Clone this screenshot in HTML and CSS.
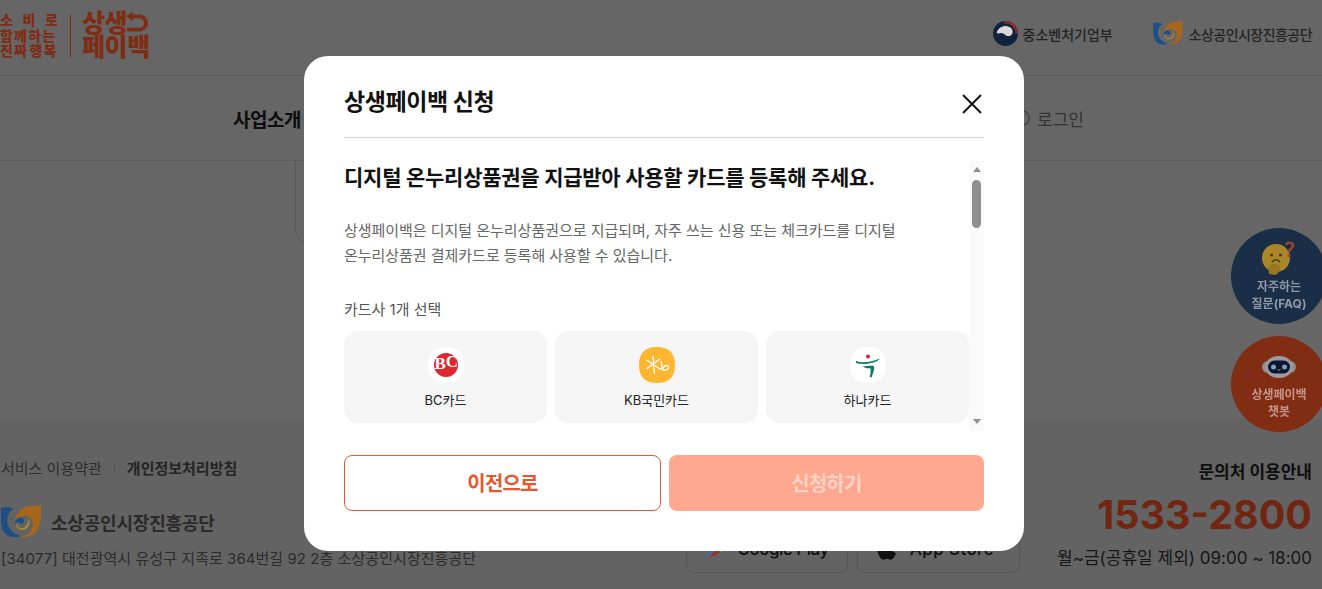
FILE: index.html
```html
<!DOCTYPE html>
<html lang="ko">
<head>
<meta charset="utf-8">
<title>상생페이백 신청</title>
<link rel="stylesheet" href="styles.css">
</head>
<body>
<div class="page">
  <header class="top">
    <div class="brand">
      <div class="slogan"><span class="spread"><i>소</i><i>비</i><i>로</i></span><span>함께하는</span><span class="slogan-tight">진짜 행복</span></div>
      <div class="brand-rule"></div>
      <div class="wordmark">
        <div class="wm-row"><span>상생</span>
          <svg class="wm-arrow" viewBox="0 0 22 22"><path d="M5 3.500h9a6.500 6.500 0 0 1 0 14H1" fill="none" stroke="#7f2c14" stroke-width="4"/><path d="M7 -1.500v10L0 3.500z" fill="#7f2c14"/></svg>
        </div>
        <div class="wm-row"><span>페이백</span></div>
      </div>
    </div>
    <div class="orgs">
      <div class="org org-moef">
        <svg class="org-mark" viewBox="0 0 24 24"><circle cx="12" cy="12" r="12" fill="#10233c"/><path d="M3.500 11C6 4.500 14 3 18 7.500c1.800 3 .8 6.500-2.500 7-3.500.5-4.500-3-7.500-3-2 0-3.500 1.500-4.500-.5z" fill="#d8d8d8"/><path d="M10.500 1.300A10.800 10.800 0 0 1 22.700 12" fill="none" stroke="#8c2a33" stroke-width="2.500"/></svg>
        <span>중소벤처기업부</span>
      </div>
      <div class="org org-semas">
        <svg class="org-mark-wide" viewBox="0 0 40 34"><use href="#semas"/></svg>
        <span>소상공인시장진흥공단</span>
      </div>
    </div>
  </header>

  <nav class="nav">
    <a class="nav-item">사업소개</a>
    <a class="login">
      <svg class="login-icon" viewBox="0 0 20 20"><circle cx="10" cy="10" r="8" fill="none" stroke="#3b3b3b" stroke-width="1.300"/></svg>
      로그인
    </a>
  </nav>

  <main class="main"><div class="panel"></div></main>

  <footer class="foot">
    <div class="foot-left">
      <div class="policy"><span>서비스 이용약관</span><i class="policy-sep"></i><b>개인정보처리방침</b></div>
      <div class="foot-org">
        <svg class="foot-mark" viewBox="0 0 40 34"><use href="#semas"/></svg>
        <span>소상공인시장진흥공단</span>
      </div>
      <p class="address">[34077] 대전광역시 유성구 지족로 364번길 92 2층 소상공인시장진흥공단</p>
    </div>
    <div class="stores">
      <a class="store">
        <svg class="store-icon" viewBox="0 0 20 20"><path d="M2 1l9 9-9 9z" fill="#4c6b8c"/><path d="M2 1l12 6-3 3z" fill="#3c7a4f"/><path d="M2 19l12-6-3-3z" fill="#9a3324"/><path d="M14 7l5 3-5 3-3-3z" fill="#a6852a"/></svg>
        <span class="store-gp">Google Play</span>
      </a>
      <a class="store store-apple">
        <svg class="store-icon" viewBox="0 0 20 20"><path d="M14 5c-2 0-3 1-4 1S8 5 6 5C3.500 5 2 7.500 2 10.500 2 14.500 5 19 7 19c1.200 0 1.800-.8 3-.8s1.800.8 3 .8c1.700 0 3.700-3 4.500-5.500-2-.8-3-2-3-4 0-1.700 1-3 2.300-3.500C16.800 5.500 15.500 5 14 5zM10 4.500C10 2.500 11.500 1 13.500.7 13.700 2.700 12 4.500 10 4.500z" fill="#111"/></svg>
        <span class="store-as">App Store</span>
      </a>
    </div>
    <div class="contact">
      <b class="contact-title">문의처 이용안내</b>
      <strong class="contact-tel">1533-2800</strong>
      <span class="contact-hours">월~금(공휴일 제외) 09:00 ~ 18:00</span>
    </div>
  </footer>
</div>

<div class="floats">
  <a class="float float-faq">
    <svg class="float-icon" viewBox="0 0 36 36">
      <circle cx="15" cy="18" r="14" fill="#a98729"/>
      <path d="M8 34c-1-5 0-9 4-10 3-.5 6 1 7 3 1 3-2 7-5 8z" fill="#967622"/>
      <circle cx="10.500" cy="15" r="1.500" fill="#4a3b15"/><circle cx="19.500" cy="15" r="1.500" fill="#4a3b15"/>
      <path d="M11 22c2-3 6-3 8 0" fill="none" stroke="#4a3b15" stroke-width="1.600"/>
      <path d="M25 5c1-3 6-3 7 0 .7 3-4 3.500-4 7" fill="none" stroke="#99452a" stroke-width="2.600"/><circle cx="28" cy="15.500" r="1.600" fill="#99452a"/>
    </svg>
    <span>자주하는<br>질문(FAQ)</span>
  </a>
  <a class="float float-chat">
    <svg class="float-icon" viewBox="0 0 36 36">
      <rect x="1" y="13" width="34" height="12" rx="6" fill="#8e8e8e"/>
      <ellipse cx="18" cy="19" rx="14" ry="11" fill="#9c9c9c"/>
      <rect x="7" y="12.500" width="22" height="13" rx="6.500" fill="#0e1530"/>
      <circle cx="12.500" cy="19" r="2.500" fill="#76a8b0"/><circle cx="23.500" cy="19" r="2.500" fill="#76a8b0"/>
      <path d="M16.500 21.500q1.500 1.500 3 0" fill="none" stroke="#76a8b0"/>
    </svg>
    <span>상생페이백<br>챗봇</span>
  </a>
</div>

<div class="scrim">
  <section class="modal">
    <header class="modal-head">
      <h2>상생페이백 신청</h2>
      <button class="close" aria-label="닫기">
        <svg viewBox="0 0 20 20"><path d="M1 1l18 18M19 1L1 19" stroke="#111" stroke-width="2" fill="none"/></svg>
      </button>
    </header>
    <div class="modal-body">
      <div class="modal-content">
        <h3>디지털 온누리상품권을 지급받아 사용할 카드를 등록해 주세요.</h3>
        <p class="desc">상생페이백은 디지털 온누리상품권으로 지급되며, 자주 쓰는 신용 또는 체크카드를 디지털<br>온누리상품권 결제카드로 등록해 사용할 수 있습니다.</p>
        <div class="pick-label">카드사 1개 선택</div>
        <div class="cards">
          <button class="card">
            <svg class="card-logo" viewBox="0 0 36 36"><use href="#squircle" fill="#fff"/><circle cx="18" cy="18" r="12" fill="#e02533"/><text class="bc-mark" x="6.500" y="22">B<tspan dy="-2">C</tspan></text></svg>
            <span>BC카드</span>
          </button>
          <button class="card">
            <svg class="card-logo" viewBox="0 0 36 36"><use href="#squircle" fill="#fdb62f"/><path d="M14 9l1.500 18M7.500 13L21 22M21 12L7.500 22" stroke="#fff" stroke-width="1.300" fill="none"/><path d="M22 14c.5 3 1 5 1.500 8 .5 2 5 1.500 6-1 .8-2.500-2.500-3.500-4-1.500-1.500 1.700-3 3-5.500 2.500" stroke="#fff" stroke-width="1.300" fill="none"/></svg>
            <span>KB국민카드</span>
          </button>
          <button class="card">
            <svg class="card-logo" viewBox="0 0 36 36"><use href="#squircle" fill="#fff"/><circle cx="18" cy="9.500" r="2" fill="#d6213f"/><path d="M6 14c6 2.500 16 1 24-2.500-3 4.500-16 7-24 4.500z" fill="#0c7a67"/><path d="M12.500 19.500c5-.5 9-1 11.500-.3.600 3.500-1 7.500-2.600 11.300l-1.700-.5c.8-3.200 1.300-6.500.6-8.800-2 .3-4 .2-7.800-1.700z" fill="#0c7a67"/></svg>
            <span>하나카드</span>
          </button>
        </div>
      </div>
      <div class="scrollbar" aria-hidden="true">
        <i class="arrow-up"></i>
        <i class="thumb"></i>
        <i class="track-fill"></i>
        <i class="arrow-down"></i>
      </div>
    </div>
    <div class="modal-actions">
      <button class="btn btn-prev">이전으로</button>
      <button class="btn btn-next" disabled>신청하기</button>
    </div>
  </section>
</div>

<svg class="defs" aria-hidden="true">
  <defs>
    <path id="squircle" d="M18 0c12 0 18 6 18 18s-6 18-18 18S0 30 0 18 6 0 18 0z"/>
    <g id="semas">
      <path d="M0 3c4-1.500 8-1.500 12 1-4 3-6.500 8-5.500 14 1 6 6 11 13.500 13-9 4-20-1-20-14z" fill="#1d4f86"/>
      <path d="M40 0c1 14-1 24-7 29-4 3-9 4-13 2 7 0 12-5 12-12 0-6-5-9-9-8-5 1-8 5-8 10-2-8 2-16 10-19 6-1.500 10-1 15-2z" fill="#a8651c"/>
      <path d="M15 17c-.5 7 6 10 11 6 3-3 3-7 1-9 .5 4-1.500 9-6 9.500-3 .2-5-2-6-6.500z" fill="#b0901f"/>
      <path d="M14.500 19c-1-4 2-7 5.500-6.500 3 .5 4 3.500 2.500 5.500-1.500 1.800-4 1-4.500-1-1 .5-2.500 1-3.500 2z" fill="#1d4f86"/>
    </g>
  </defs>
</svg>
</body>
</html>
```

FILE: styles.css
```css
* { box-sizing: border-box; }
html, body { margin: 0; height: 100%; overflow: hidden; }
body { background: #666; font-family: Inter, "Noto Sans CJK KR", sans-serif; color: #111; }
i { font-style: normal; }
a { display: inline-flex; }
button { font-family: inherit; cursor: pointer; }

.page { height: 589px; display: flex; flex-direction: column; }

/* header */
.top { height: 76px; flex: none; display: flex; justify-content: space-between; align-items: center; border-bottom: 1px solid #5a5a5a; padding: 0 10px 4px 0; }
.brand { display: flex; align-items: center; }
.slogan { display: flex; flex-direction: column; width: 60px; font-size: 14px; line-height: 15.500px; font-weight: 800; color: #7f2c14; white-space: nowrap; letter-spacing: 1.200px; }
.spread { display: flex; justify-content: space-between; padding-right: 1px; }
.slogan-tight { word-spacing: -3px; }
.brand-rule { width: 1px; height: 44px; background: #7f2c14; margin: 0 11px 0 10px; }
.wordmark { font-size: 25px; line-height: 23.500px; font-weight: 900; color: #7f2c14; letter-spacing: -.4px; white-space: nowrap; }
.wm-row { display: flex; align-items: center; height: 23.500px; }
.wm-arrow { width: 21px; height: 21px; margin-left: -1px; overflow: visible; }
.orgs { display: flex; gap: 40px; align-items: center; padding-bottom: 4px; }
.org { display: flex; align-items: center; gap: 6px; font-size: 14px; font-weight: 500; color: #242424; letter-spacing: -.55px; white-space: nowrap; }
.org-moef { letter-spacing: 0; gap: 5px; }
.org-mark { width: 25px; height: 25px; }
.org-mark-wide { width: 30px; height: 25px; }

/* nav */
.nav { height: 85px; flex: none; display: flex; align-items: center; border-bottom: 1px solid #5a5a5a; padding: 0 238px 0 233px; justify-content: space-between; }
.nav-item { font-size: 19px; font-weight: 700; color: #0d0d0d; letter-spacing: -.5px; }
.login { align-items: center; gap: 6px; font-size: 17px; color: #333; }
.login-icon { width: 18px; height: 18px; }

/* main backdrop */
.main { flex: 1; padding: 0 320px 173px 295px; }
.panel { height: 85px; border: 1px solid #5a5a5a; border-top: 0; border-right: 0; border-radius: 0 0 0 18px; }

/* footer */
.foot { height: 171px; flex: none; background: #636363; display: flex; padding: 39px 10px 0 1px; }
.foot-left { width: 685px; }
.policy { display: flex; align-items: center; font-size: 15px; line-height: 22px; color: #2d2d2d; }
.policy-sep { width: 1px; height: 11px; background: #555; margin: 0 12px; }
.policy b { font-weight: 700; color: #242424; }
.foot-org { display: flex; align-items: center; gap: 10px; margin-top: 25px; font-size: 18px; font-weight: 700; color: #2a2a2a; letter-spacing: -.2px; }
.foot-mark { width: 40px; height: 34px; }
.address { margin: 8px 0 0; font-size: 15px; line-height: 24px; color: #2b2b2b; white-space: nowrap; letter-spacing: .05px; }
.stores { display: flex; gap: 9px; align-self: flex-end; padding-bottom: 17px; }
.store { width: 162px; height: 48px; border: 1px solid #565656; border-radius: 8px; align-items: center; justify-content: center; gap: 10px; font-size: 17px; font-weight: 500; color: #0d0d0d; white-space: nowrap; }
.store-apple { width: 163px; gap: 11px; padding-right: 8px; }
.store-gp { letter-spacing: -.5px; }
.store-as { letter-spacing: .4px; }
.store-icon { width: 22px; height: 22px; }
.store-apple .store-icon { width: 24px; height: 24px; }
.contact { flex: 1; display: flex; flex-direction: column; align-items: flex-end; }
.contact-title { font-size: 17px; line-height: 24px; font-weight: 700; color: #0f0f0f; margin-top: 2px; }
.contact-tel { font-size: 39.500px; line-height: 46px; margin-top: 8px; font-weight: 700; color: #712611; }
.contact-hours { font-size: 17px; line-height: 24px; margin-top: 8px; color: #161616; white-space: nowrap; }

/* floating buttons */
.floats { position: fixed; top: 228px; left: 1231px; display: flex; flex-direction: column; gap: 12px; }
.float { width: 96px; height: 96px; border-radius: 50%; flex-direction: column; align-items: center; padding-top: 12px; font-size: 12px; line-height: 16.500px; font-weight: 700; text-align: center; white-space: nowrap; }
.float-icon { width: 36px; height: 36px; margin-bottom: 3px; }
.float-faq { background: #1b2e47; color: #8f98a6; }
.float-chat { background: #802d14; color: #c9938a; }

/* modal */
.scrim { position: fixed; inset: 0; display: flex; justify-content: center; padding: 56px 298px 0 304px; }
.modal { width: 720px; height: 495px; background: #fff; border-radius: 24px; padding: 0 40px; display: flex; flex-direction: column; }
.modal-head { height: 82px; flex: none; border-bottom: 1px solid #d4d4d4; display: flex; justify-content: space-between; align-items: center; padding-top: 7px; }
.modal-head h2 { margin: 0; font-size: 23px; font-weight: 700; letter-spacing: -.4px; color: #111; }
.close { width: 20px; height: 20px; padding: 0; border: 0; background: none; margin: 8px 2px 0 0; display: flex; }
.close svg { width: 20px; height: 20px; }
.modal-body { height: 270px; flex: none; margin-top: 23px; display: flex; overflow: hidden; }
.modal-content { width: 625px; flex: none; padding-top: 2px; }
.modal-content h3 { margin: 0; font-size: 21px; line-height: 30px; font-weight: 700; color: #111; letter-spacing: -.25px; white-space: nowrap; }
.desc { margin: 25px 0 0; font-size: 15px; line-height: 25px; color: #666; letter-spacing: -.03px; white-space: nowrap; }
.pick-label { margin-top: 30px; font-size: 15px; line-height: 24px; color: #555; }
.cards { display: grid; grid-template-columns: repeat(3, 203px); gap: 8px; margin-top: 9px; }
.card { height: 92px; border: 0; border-radius: 14px; background: #f5f5f5; display: flex; flex-direction: column; align-items: center; padding: 16px 0 0; font-size: 13px; line-height: 20px; color: #222; }
.card-logo { width: 36px; height: 36px; margin-bottom: 7px; }
.bc-mark { font: 700 17px "Liberation Serif", serif; fill: #fff; }
.scrollbar { flex: 1; background: #fafafa; display: flex; flex-direction: column; align-items: center; padding: 6px 0 7px; }
.arrow-up { border: 4px solid transparent; border-top: 0; border-bottom: 5px solid #8f8f8f; }
.arrow-down { border: 4px solid transparent; border-bottom: 0; border-top: 5px solid #8f8f8f; }
.thumb { width: 9px; height: 48px; border-radius: 5px; background: #8f8f8f; margin-top: 8px; }
.track-fill { flex: 1; }
.modal-actions { display: flex; gap: 8px; margin-top: 24px; }
.btn { height: 56px; border-radius: 8px; font-size: 20px; font-weight: 700; letter-spacing: -.8px; padding-bottom: 2px; }
.btn-prev { width: 317px; background: #fff; border: 1px solid #e8572a; color: #e8572a; }
.btn-next { width: 315px; background: #ffa78f; border: 0; color: #ffd3c6; }

.defs { position: absolute; width: 0; height: 0; }
```
